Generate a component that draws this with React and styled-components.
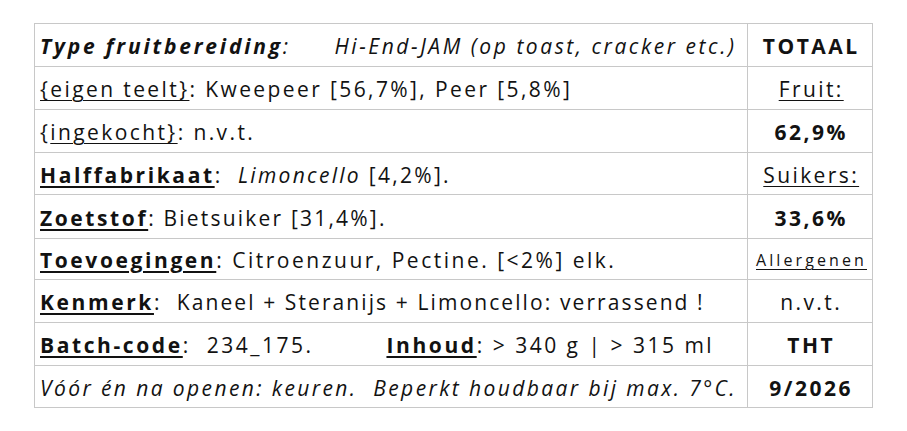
import React from 'react';
import styled, { createGlobalStyle } from 'styled-components';

const Global = createGlobalStyle`
  html, body { margin: 0; padding: 0; background: #ffffff; }
  body { font-family: "Open Sans", "Noto Sans", sans-serif; color: #121212; }
`;

const Page = styled.div`
  padding: 23px 0 0 34px;
`;

const Grid = styled.div`
  display: grid;
  grid-template-columns: 712px 124px;
  grid-template-rows: 42px 42px 42px 41px 43px 40px 42px 42px 41px;
  gap: 1px;
  padding: 1px;
  background: #c8c8c8;
  width: max-content;
`;

const Cell = styled.div`
  background: #ffffff;
  display: flex;
  align-items: center;
  justify-content: ${(p) => (p.$center ? 'center' : 'flex-start')};
  padding: ${(p) => (p.$center ? '2px 0 0 0' : '2px 0 0 5px')};
  overflow: hidden;
`;

const Line = styled.span`
  font-size: 21px;
  letter-spacing: ${(p) => p.$ls || 2.4}px;
  white-space: pre;
  font-style: ${(p) => (p.$italic ? 'italic' : 'normal')};
`;

const Label = styled.span`
  font-weight: 700;
  letter-spacing: 2.6px;
  text-decoration: underline;
  text-decoration-thickness: 2px;
  text-underline-offset: 3px;
`;

const TitleLabel = styled.span`
  font-weight: 700;
  font-style: italic;
  letter-spacing: 2.8px;
`;

const Under = styled.span`
  text-decoration: underline;
  text-decoration-thickness: 1px;
  text-underline-offset: 3px;
`;

const Em = styled.span`
  font-style: italic;
`;

const Spaced = styled.span`
  letter-spacing: ${(p) => p.$ls}px;
`;

const Gap = styled.span`
  display: inline-block;
  width: ${(p) => p.$w}px;
`;

const Total = styled.span`
  font-size: 21px;
  letter-spacing: ${(p) => (p.$bold ? '2.5px' : '2.4px')};
  font-weight: ${(p) => (p.$bold ? 700 : 400)};
  text-decoration: ${(p) => (p.$under ? 'underline' : 'none')};
  text-decoration-thickness: 1px;
  text-underline-offset: 3px;
  margin-right: -2.4px;
`;

const Small = styled.span`
  font-size: 16px;
  letter-spacing: 3.1px;
  text-decoration: underline;
  text-decoration-thickness: 1px;
  text-underline-offset: 3px;
  margin-right: -3px;
`;

export default function App() {
  return (
    <>
      <Global />
      <Page>
        <Grid>
          <Cell>
            <Line $italic>
              <TitleLabel>Type fruitbereiding</TitleLabel>:<Gap $w={44} /><Spaced $ls={2.55}>Hi-End-JAM (op toast, cracker etc.)</Spaced>
            </Line>
          </Cell>
          <Cell $center><Total $bold>TOTAAL</Total></Cell>

          <Cell>
            <Line><Under>{'{eigen teelt}'}</Under>: Kweepeer [56,7%], Peer [5,8%]</Line>
          </Cell>
          <Cell $center><Total $under>Fruit:</Total></Cell>

          <Cell>
            <Line>{'{'}<Under>{'ingekocht}'}</Under>: n.v.t.</Line>
          </Cell>
          <Cell $center><Total $bold>62,9%</Total></Cell>

          <Cell>
            <Line $ls={2.3}><Label>Halffabrikaat</Label>:  <Em>Limoncello</Em> [4,2%].</Line>
          </Cell>
          <Cell $center><Total $under>Suikers:</Total></Cell>

          <Cell>
            <Line $ls={2.2}><Label>Zoetstof</Label>: Bietsuiker [31,4%].</Line>
          </Cell>
          <Cell $center><Total $bold>33,6%</Total></Cell>

          <Cell>
            <Line $ls={2.5}><Label>Toevoegingen</Label>: Citroenzuur, Pectine. [&lt;2%] elk.</Line>
          </Cell>
          <Cell $center><Small>Allergenen</Small></Cell>

          <Cell>
            <Line $ls={2.1}><Label>Kenmerk</Label>:  Kaneel + Steranijs + Limoncello: verrassend !</Line>
          </Cell>
          <Cell $center><Total>n.v.t.</Total></Cell>

          <Cell>
            <Line $ls={2.5}><Label>Batch-code</Label>:  234_175.<Gap $w={73} /><Label>Inhoud</Label>: &gt; 340 g | &gt; 315 ml</Line>
          </Cell>
          <Cell $center><Total $bold>THT</Total></Cell>

          <Cell>
            <Line $italic>Vóór én na openen: keuren.  Beperkt houdbaar bij max. 7°C.</Line>
          </Cell>
          <Cell $center><Total $bold>9/2026</Total></Cell>
        </Grid>
      </Page>
    </>
  );
}
